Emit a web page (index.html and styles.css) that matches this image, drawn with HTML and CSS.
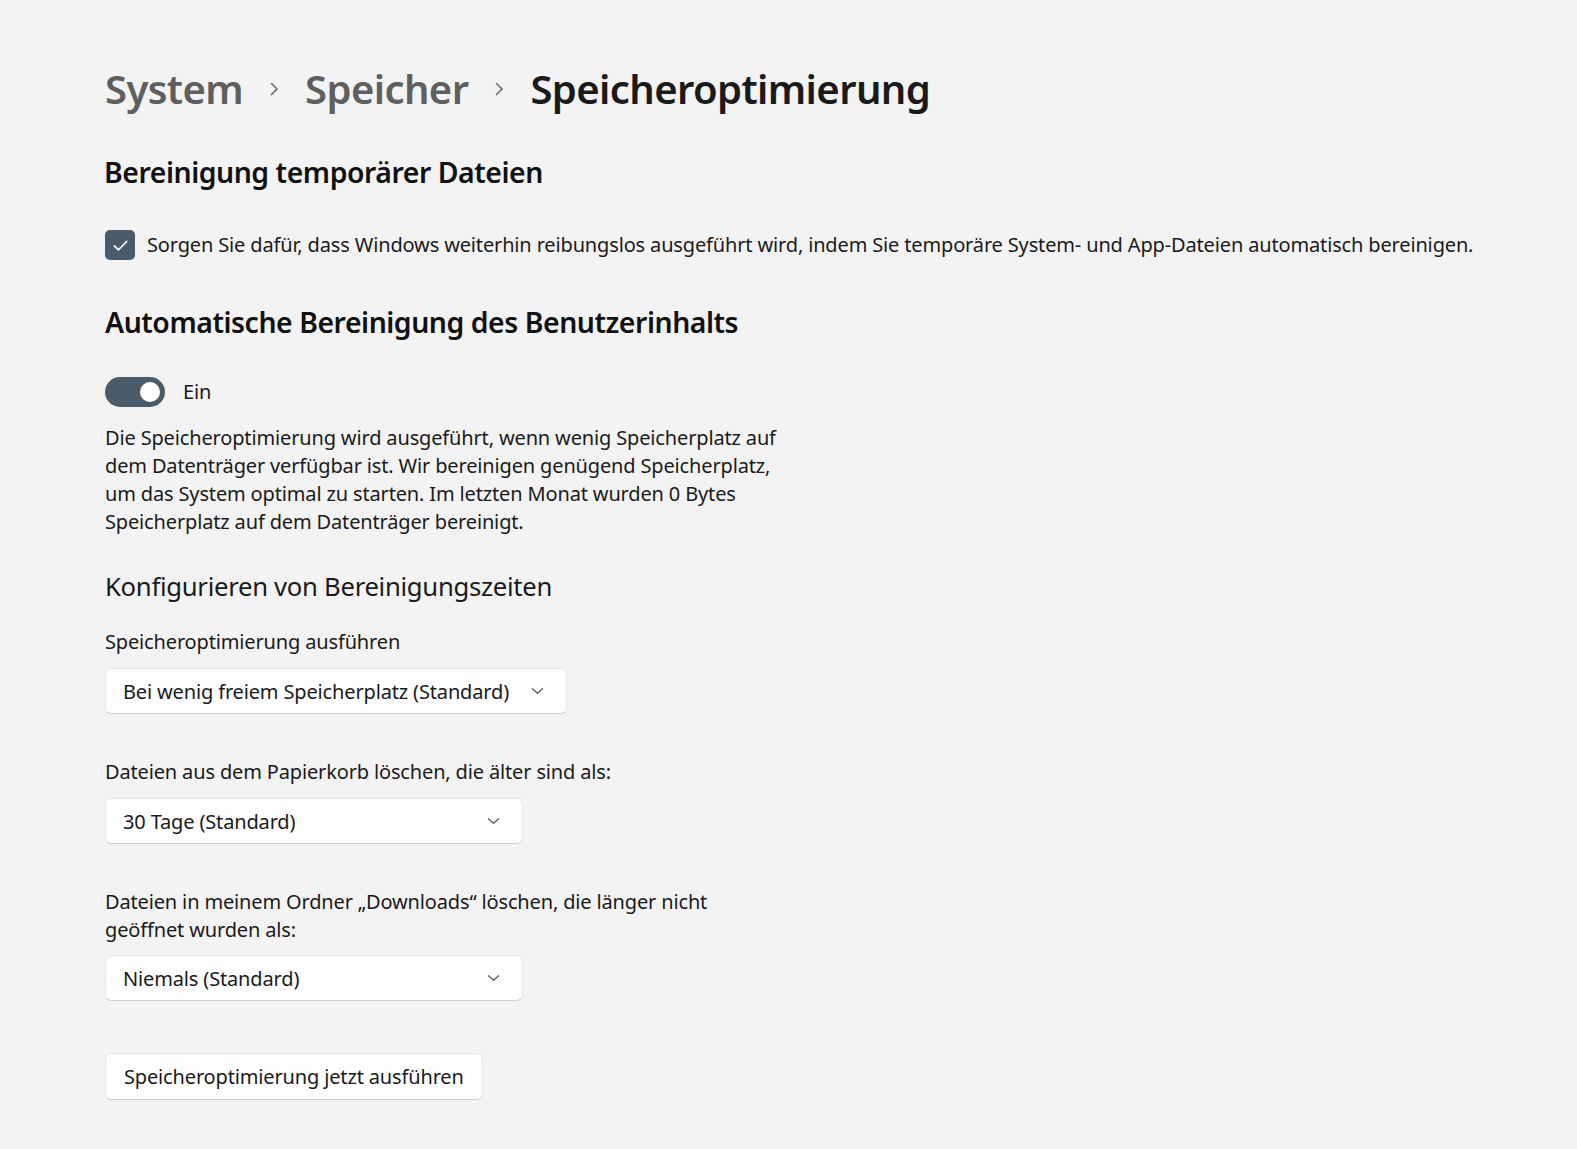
FILE: index.html
```html
<!DOCTYPE html>
<html lang="de">
<head>
<meta charset="utf-8">
<title>Speicheroptimierung</title>
<link rel="stylesheet" href="styles.css">
</head>
<body>
<main class="page">
  <nav class="crumbs">
    <span class="crumb">System</span>
    <svg class="sep" viewBox="0 0 10 16" width="10" height="16"><path d="M2.5 2.5 L8 8 L2.5 13.5" fill="none" stroke="currentColor" stroke-width="1.6" stroke-linecap="round" stroke-linejoin="round"/></svg>
    <span class="crumb">Speicher</span>
    <svg class="sep" viewBox="0 0 10 16" width="10" height="16"><path d="M2.5 2.5 L8 8 L2.5 13.5" fill="none" stroke="currentColor" stroke-width="1.6" stroke-linecap="round" stroke-linejoin="round"/></svg>
    <span class="crumb current">Speicheroptimierung</span>
  </nav>

  <h2 class="section-title first">Bereinigung temporärer Dateien</h2>

  <label class="check-row">
    <span class="checkbox"><svg viewBox="0 0 16 16" width="16" height="16"><path d="M2.8 8.4 L6.3 11.7 L13.2 4.6" fill="none" stroke="#ffffff" stroke-width="1.4" stroke-linecap="round" stroke-linejoin="round"/></svg></span>
    <span class="check-text">Sorgen Sie dafür, dass Windows weiterhin reibungslos ausgeführt wird, indem Sie temporäre System- und App-Dateien automatisch bereinigen.</span>
  </label>

  <h2 class="section-title second">Automatische Bereinigung des Benutzerinhalts</h2>

  <div class="toggle-row">
    <span class="toggle"><span class="knob"></span></span>
    <span class="toggle-text">Ein</span>
  </div>

  <p class="desc">Die Speicheroptimierung wird ausgeführt, wenn wenig Speicherplatz auf dem Datenträger verfügbar ist. Wir bereinigen genügend Speicherplatz, um das System optimal zu starten. Im letzten Monat wurden 0 Bytes Speicherplatz auf dem Datenträger bereinigt.</p>

  <h3 class="sub-title">Konfigurieren von Bereinigungszeiten</h3>

  <div class="field field-1">
    <div class="field-label">Speicheroptimierung ausführen</div>
    <div class="select">
      <span class="select-value">Bei wenig freiem Speicherplatz (Standard)</span>
      <svg class="chev" viewBox="0 0 14 8" width="14" height="8"><path d="M1.5 1.5 L7 6.5 L12.5 1.5" fill="none" stroke="#5a5a5a" stroke-width="1.3" stroke-linecap="round" stroke-linejoin="round"/></svg>
    </div>
  </div>

  <div class="field field-2">
    <div class="field-label">Dateien aus dem Papierkorb löschen, die älter sind als:</div>
    <div class="select">
      <span class="select-value">30 Tage (Standard)</span>
      <svg class="chev" viewBox="0 0 14 8" width="14" height="8"><path d="M1.5 1.5 L7 6.5 L12.5 1.5" fill="none" stroke="#5a5a5a" stroke-width="1.3" stroke-linecap="round" stroke-linejoin="round"/></svg>
    </div>
  </div>

  <div class="field field-3">
    <div class="field-label wrap">Dateien in meinem Ordner „Downloads“ löschen, die länger nicht geöffnet wurden als:</div>
    <div class="select">
      <span class="select-value">Niemals (Standard)</span>
      <svg class="chev" viewBox="0 0 14 8" width="14" height="8"><path d="M1.5 1.5 L7 6.5 L12.5 1.5" fill="none" stroke="#5a5a5a" stroke-width="1.3" stroke-linecap="round" stroke-linejoin="round"/></svg>
    </div>
  </div>

  <button class="btn" type="button">Speicheroptimierung jetzt ausführen</button>
</main>
</body>
</html>
```

FILE: styles.css
```css
html, body {
  margin: 0;
  padding: 0;
  background: #f3f3f3;
}

body {
  font-family: "Noto Sans", "Open Sans", sans-serif;
  color: #1a1a1a;
  font-size: 20px;
  letter-spacing: -0.15px;
}

.page {
  padding: 61px 0 40px 105px;
  display: flex;
  flex-direction: column;
  align-items: flex-start;
}

.crumbs {
  display: flex;
  align-items: center;
  height: 56px;
  font-size: 40px;
  font-weight: 600;
  letter-spacing: -0.6px;
  gap: 26px;
  color: #5f5f5f;
}

.crumb {
  line-height: 56px;
}

.crumb.current {
  color: #1a1a1a;
}

.sep {
  color: #6a6a6a;
  flex: none;
}

.section-title {
  margin: 0;
  font-size: 28.4px;
  font-weight: 600;
  line-height: 40px;
  letter-spacing: -0.45px;
  color: #111;
}

.section-title.first {
  margin-top: 35px;
  margin-left: -1px;
}

.section-title.second {
  margin-top: 42px;
}

.check-row {
  margin-top: 38px;
  display: flex;
  align-items: center;
  gap: 12px;
  line-height: 30px;
}

.checkbox {
  width: 30px;
  height: 30px;
  border-radius: 5px;
  background: #4a5c6a;
  display: flex;
  align-items: center;
  justify-content: center;
  flex: none;
}

.checkbox svg {
  width: 19px;
  height: 19px;
}

.toggle-row {
  margin-top: 35px;
  display: flex;
  align-items: center;
  gap: 18px;
  line-height: 30px;
}

.toggle {
  width: 60px;
  height: 30px;
  border-radius: 15px;
  background: #4a5c6a;
  display: flex;
  align-items: center;
  justify-content: flex-end;
  padding-right: 5px;
  box-sizing: border-box;
  flex: none;
}

.knob {
  width: 20px;
  height: 20px;
  border-radius: 50%;
  background: #ffffff;
}

.desc {
  margin: 17px 0 0;
  max-width: 684px;
  line-height: 28px;
}

.sub-title {
  margin: 33px 0 0;
  font-size: 25.7px;
  font-weight: 400;
  line-height: 36px;
  letter-spacing: -0.3px;
}

.field {
  display: flex;
  flex-direction: column;
  align-items: flex-start;
}

.field-1 { margin-top: 23px; }
.field-2 { margin-top: 44px; }
.field-3 { margin-top: 44px; }

.field-label {
  line-height: 28px;
  margin-bottom: 12px;
}

.field-label.wrap {
  max-width: 640px;
  margin-bottom: 11px;
}

.select {
  box-sizing: border-box;
  min-width: 418px;
  height: 46px;
  padding: 0 22px 0 17px;
  display: flex;
  align-items: center;
  justify-content: space-between;
  gap: 22px;
  background: #fdfdfd;
  border: 1px solid #e6e6e6;
  border-bottom-color: #cfcfcf;
  border-radius: 6px;
}

.chev {
  flex: none;
  width: 13px;
  height: 8px;
}

.btn {
  margin-top: 52px;
  height: 47px;
  padding: 0 18px;
  font: inherit;
  letter-spacing: inherit;
  color: #1a1a1a;
  background: #fdfdfd;
  border: 1px solid #e6e6e6;
  border-bottom-color: #cfcfcf;
  border-radius: 6px;
}
```
